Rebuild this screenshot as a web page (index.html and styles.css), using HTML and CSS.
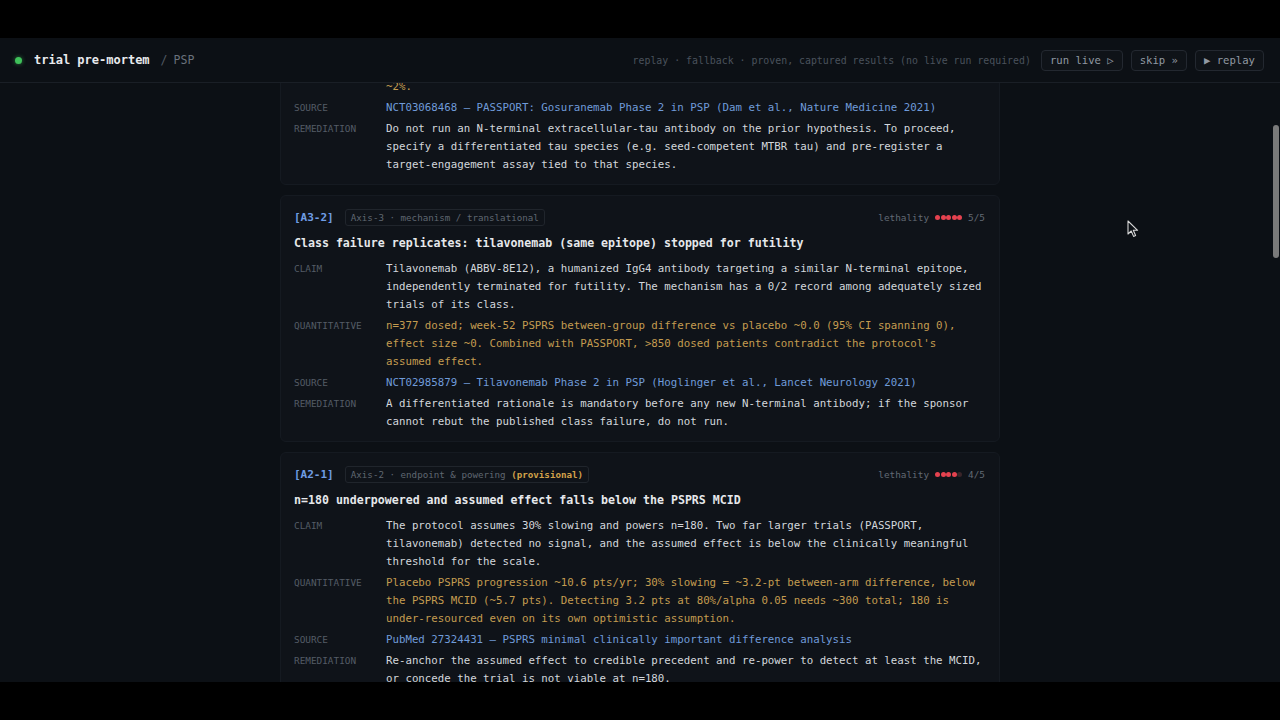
FILE: index.html
```html
<!DOCTYPE html>
<html lang="en">
<head>
<meta charset="utf-8">
<title>trial pre-mortem / PSP</title>
<link rel="stylesheet" href="styles.css">
</head>
<body>
<div class="screen">
  <header class="topbar">
    <div class="brand">
      <span class="live-dot"></span>
      <span class="app">trial pre-mortem</span>
      <span class="sep">/</span>
      <span class="crumb">PSP</span>
    </div>
    <div class="controls">
      <span class="mode">replay · fallback · proven, captured results (no live run required)</span>
      <button class="btn">run live ▷</button>
      <button class="btn">skip »</button>
      <button class="btn">▶ replay</button>
    </div>
  </header>
  <main class="viewport">
    <div class="feed">
      <article class="card">
        <div class="card-head">
          <div class="head-left">
            <span class="fid">[A3-1]</span>
            <span class="chip">Axis-3 · mechanism / translational</span>
          </div>
          <div class="lethality">lethality <span class="dots"><i class="on"></i><i class="on"></i><i class="on"></i><i class="on"></i><i class="on"></i></span> 5/5</div>
        </div>
        <h2 class="title">Direct precedent: gosuranemab (N-terminal tau) failed in PSP</h2>
        <div class="rows">
          <div class="label">Claim</div>
          <div class="value">Gosuranemab (BIIB092), an N-terminal extracellular-tau antibody, showed no efficacy on any primary or secondary endpoint in PSP despite near-complete target engagement.</div>
          <div class="label">Quantitative</div>
          <div class="value quant">n=486 randomized; week-52 PSPRS between-group difference vs placebo ~0.0, no secondary endpoint moved; free CSF N-terminal tau fell &gt;95% while clinical benefit vs placebo stayed ~2%.</div>
          <div class="label">Source</div>
          <div class="value"><a class="src" href="#">NCT03068468 — PASSPORT: Gosuranemab Phase 2 in PSP (Dam et al., Nature Medicine 2021)</a></div>
          <div class="label">Remediation</div>
          <div class="value">Do not run an N-terminal extracellular-tau antibody on the prior hypothesis. To proceed, specify a differentiated tau species (e.g. seed-competent MTBR tau) and pre-register a target-engagement assay tied to that species.</div>
        </div>
      </article>

      <article class="card">
        <div class="card-head">
          <div class="head-left">
            <span class="fid">[A3-2]</span>
            <span class="chip">Axis-3 · mechanism / translational</span>
          </div>
          <div class="lethality">lethality <span class="dots"><i class="on"></i><i class="on"></i><i class="on"></i><i class="on"></i><i class="on"></i></span> 5/5</div>
        </div>
        <h2 class="title">Class failure replicates: tilavonemab (same epitope) stopped for futility</h2>
        <div class="rows">
          <div class="label">Claim</div>
          <div class="value">Tilavonemab (ABBV-8E12), a humanized IgG4 antibody targeting a similar N-terminal epitope, independently terminated for futility. The mechanism has a 0/2 record among adequately sized trials of its class.</div>
          <div class="label">Quantitative</div>
          <div class="value quant">n=377 dosed; week-52 PSPRS between-group difference vs placebo ~0.0 (95% CI spanning 0), effect size ~0. Combined with PASSPORT, &gt;850 dosed patients contradict the protocol's assumed effect.</div>
          <div class="label">Source</div>
          <div class="value"><a class="src" href="#">NCT02985879 — Tilavonemab Phase 2 in PSP (Hoglinger et al., Lancet Neurology 2021)</a></div>
          <div class="label">Remediation</div>
          <div class="value">A differentiated rationale is mandatory before any new N-terminal antibody; if the sponsor cannot rebut the published class failure, do not run.</div>
        </div>
      </article>

      <article class="card">
        <div class="card-head">
          <div class="head-left">
            <span class="fid">[A2-1]</span>
            <span class="chip">Axis-2 · endpoint &amp; powering <b class="prov">(provisional)</b></span>
          </div>
          <div class="lethality">lethality <span class="dots"><i class="on"></i><i class="on"></i><i class="on"></i><i class="on"></i><i></i></span> 4/5</div>
        </div>
        <h2 class="title">n=180 underpowered and assumed effect falls below the PSPRS MCID</h2>
        <div class="rows">
          <div class="label">Claim</div>
          <div class="value">The protocol assumes 30% slowing and powers n=180. Two far larger trials (PASSPORT, tilavonemab) detected no signal, and the assumed effect is below the clinically meaningful threshold for the scale.</div>
          <div class="label">Quantitative</div>
          <div class="value quant">Placebo PSPRS progression ~10.6 pts/yr; 30% slowing = ~3.2-pt between-arm difference, below the PSPRS MCID (~5.7 pts). Detecting 3.2 pts at 80%/alpha 0.05 needs ~300 total; 180 is under-resourced even on its own optimistic assumption.</div>
          <div class="label">Source</div>
          <div class="value"><a class="src" href="#">PubMed 27324431 — PSPRS minimal clinically important difference analysis</a></div>
          <div class="label">Remediation</div>
          <div class="value">Re-anchor the assumed effect to credible precedent and re-power to detect at least the MCID, or concede the trial is not viable at n=180.</div>
        </div>
      </article>
    </div>
    <div class="scroll-thumb"></div>
    <svg class="cursor" width="12" height="18" viewBox="0 0 12 18">
      <path d="M1 1 L1 14 L4.2 11 L6.6 16.4 L8.6 15.5 L6.3 10.3 L10.6 10.3 Z" fill="#0c1015" stroke="#d8d8d8" stroke-width="1.1" stroke-linejoin="round"/>
    </svg>
  </main>
</div>
</body>
</html>
```

FILE: styles.css
```css
* { box-sizing: border-box; }

html, body {
  margin: 0;
  padding: 0;
  background: #000;
}

body {
  padding-top: 38px;
  font-family: "DejaVu Sans Mono", "Liberation Mono", monospace;
  color: #d3d7dc;
}

.screen {
  height: 644px;
  background: #0c1015;
  display: flex;
  flex-direction: column;
  overflow: hidden;
}

/* top bar */
.topbar {
  height: 45px;
  flex: none;
  display: flex;
  align-items: center;
  justify-content: space-between;
  padding: 0 16px 0 15px;
  border-bottom: 1px solid #1a1f26;
  background: #0c1015;
  position: relative;
  z-index: 2;
}

.brand {
  display: flex;
  align-items: center;
}

.live-dot {
  width: 7px;
  height: 7px;
  border-radius: 50%;
  background: #3fc15a;
  box-shadow: 0 0 4px rgba(63, 193, 90, 0.6);
  margin-right: 12px;
}

.app {
  font-size: 12px;
  font-weight: bold;
  color: #e8eaed;
}

.sep {
  font-size: 11.5px;
  color: #525a64;
  margin: 0 6px 0 11px;
}

.crumb {
  font-size: 11.5px;
  color: #6a727c;
}

.controls {
  display: flex;
  align-items: center;
  gap: 8px;
}

.mode {
  font-size: 9.9px;
  color: #4a525c;
  margin-right: 2px;
}

.btn {
  font-family: inherit;
  font-size: 10.6px;
  color: #9199a3;
  background: #0f1318;
  border: 1px solid #232830;
  border-radius: 4px;
  height: 21px;
  padding: 0 8px;
  line-height: 19px;
}

/* viewport */
.viewport {
  flex: 1;
  position: relative;
  overflow: hidden;
}

.feed {
  width: 720px;
  margin: -145px auto 0;
  display: flex;
  flex-direction: column;
  gap: 10px;
}

.card {
  background: #0f1319;
  border: 1px solid #151a21;
  border-radius: 6px;
  padding: 12px 14px 10px 13px;
}

.card-head {
  height: 18px;
  display: flex;
  align-items: center;
  justify-content: space-between;
}

.head-left {
  display: flex;
  align-items: center;
  gap: 11px;
}

.fid {
  font-size: 11px;
  font-weight: bold;
  color: #6f9de4;
}

.chip {
  font-size: 9.2px;
  color: #5f6771;
  border: 1px solid #20252c;
  border-radius: 3px;
  padding: 0 5px;
  height: 17px;
  line-height: 15px;
}

.prov {
  color: #d3a24a;
  font-weight: bold;
}

.lethality {
  font-size: 9.4px;
  color: #626a74;
  display: flex;
  align-items: center;
  gap: 6px;
}

.dots {
  display: flex;
  gap: 0.5px;
}

.dots i {
  width: 5px;
  height: 5px;
  border-radius: 50%;
  background: #3a2529;
}

.dots i.on {
  background: #e5424f;
}

.title {
  margin: 8px 0 0;
  font-size: 11.6px;
  line-height: 18px;
  font-weight: bold;
  color: #e6e8eb;
}

.rows {
  margin-top: 8px;
  display: grid;
  grid-template-columns: 92px 1fr;
  row-gap: 3px;
}

.label {
  font-size: 9.4px;
  line-height: 18px;
  text-transform: uppercase;
  color: #545c66;
}

.value {
  font-size: 10.75px;
  line-height: 18px;
  color: #d3d7dc;
}

.quant {
  color: #c49c50;
}

.src {
  color: #6f9bd9;
  text-decoration: none;
}

/* overlays */
.scroll-thumb {
  position: absolute;
  right: 1px;
  top: 42px;
  width: 6px;
  height: 133px;
  border-radius: 3px;
  background: #7a7a7a;
}

.cursor {
  position: absolute;
  left: 1127px;
  top: 137px;
}
```
